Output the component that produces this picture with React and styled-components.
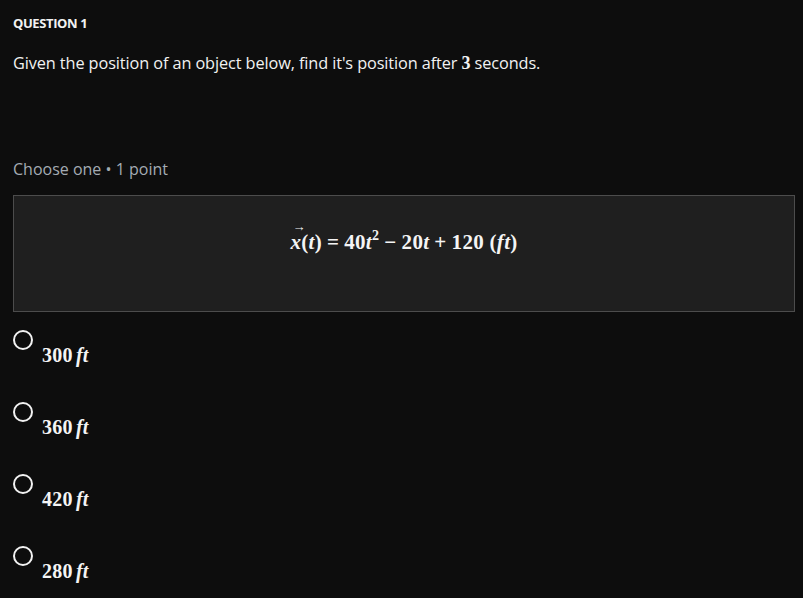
import React from "react";
import styled, { createGlobalStyle } from "styled-components";

const Global = createGlobalStyle`
  html, body { margin: 0; padding: 0; background: #0d0d0d; }
  body { font-family: "Open Sans", "Noto Sans", sans-serif; color: #f2f2f2; }
`;

const Page = styled.div`
  padding: 14px 8px 0 13px;
  min-height: 598px;
  box-sizing: border-box;
`;

const Label = styled.div`
  font-size: 13px;
  font-weight: 700;
  letter-spacing: -0.4px;
  line-height: 18px;
`;

const Prompt = styled.p`
  margin: 20px 0 0 0;
  font-size: 16.3px;
  line-height: 22px;
  letter-spacing: -0.1px;
`;

const Num = styled.b`
  font-family: "Liberation Serif", "DejaVu Serif", serif;
  font-size: 18px;
`;

const Meta = styled.div`
  margin-top: 84px;
  font-size: 16px;
  color: #a4abb3;
  line-height: 22px;
`;

const MathBox = styled.div`
  margin-top: 15px;
  height: 117px;
  background: #1f1f1f;
  border: 1px solid #4c4c4c;
  display: flex;
  justify-content: center;
  padding-top: 34px;
  box-sizing: border-box;
`;

const Math = styled.span`
  font-family: "Liberation Serif", "DejaVu Serif", serif;
  font-weight: 700;
  font-size: 21px;
  color: #f4f4f4;
  white-space: nowrap;
  letter-spacing: 0.3px;
  i { font-style: italic; }
  sup { font-size: 14px; line-height: 0; vertical-align: 9px; }
`;

const Op = styled.span`
  margin: 0 5px;
`;

const Vec = styled.span`
  position: relative;
  font-style: italic;
  &::before {
    content: "→";
    position: absolute;
    left: 2px;
    top: -11px;
    font-size: 13px;
    font-style: normal;
  }
`;

const Options = styled.div`
  display: flex;
  flex-direction: column;
  gap: 34px;
  margin-top: 18px;
`;

const Option = styled.label`
  display: flex;
  align-items: flex-start;
  gap: 9px;
  height: 38px;
`;

const Radio = styled.span`
  width: 16px;
  height: 16px;
  border: 2px solid #f2f2f2;
  border-radius: 50%;
  flex-shrink: 0;
`;

const Answer = styled.span`
  margin-top: 14px;
  font-family: "Liberation Serif", "DejaVu Serif", serif;
  font-weight: 700;
  font-size: 20px;
  color: #f4f4f4;
  letter-spacing: 0.3px;
  i { font-style: italic; margin-left: 3px; }
`;

const answers = ["300", "360", "420", "280"];

export default function App() {
  return (
    <>
      <Global />
      <Page>
        <Label>QUESTION 1</Label>
        <Prompt>
          Given the position of an object below, find it's position after <Num>3</Num> seconds.
        </Prompt>
        <Meta>Choose one • 1 point</Meta>
        <MathBox>
          <Math>
            <Vec>x</Vec>(<i>t</i>)<Op>=</Op>40<i>t</i><sup>2</sup><Op>−</Op>20<i>t</i><Op>+</Op>120 (<i>ft</i>)
          </Math>
        </MathBox>
        <Options>
          {answers.map((a) => (
            <Option key={a}>
              <Radio />
              <Answer>
                {a}<i>ft</i>
              </Answer>
            </Option>
          ))}
        </Options>
      </Page>
    </>
  );
}
